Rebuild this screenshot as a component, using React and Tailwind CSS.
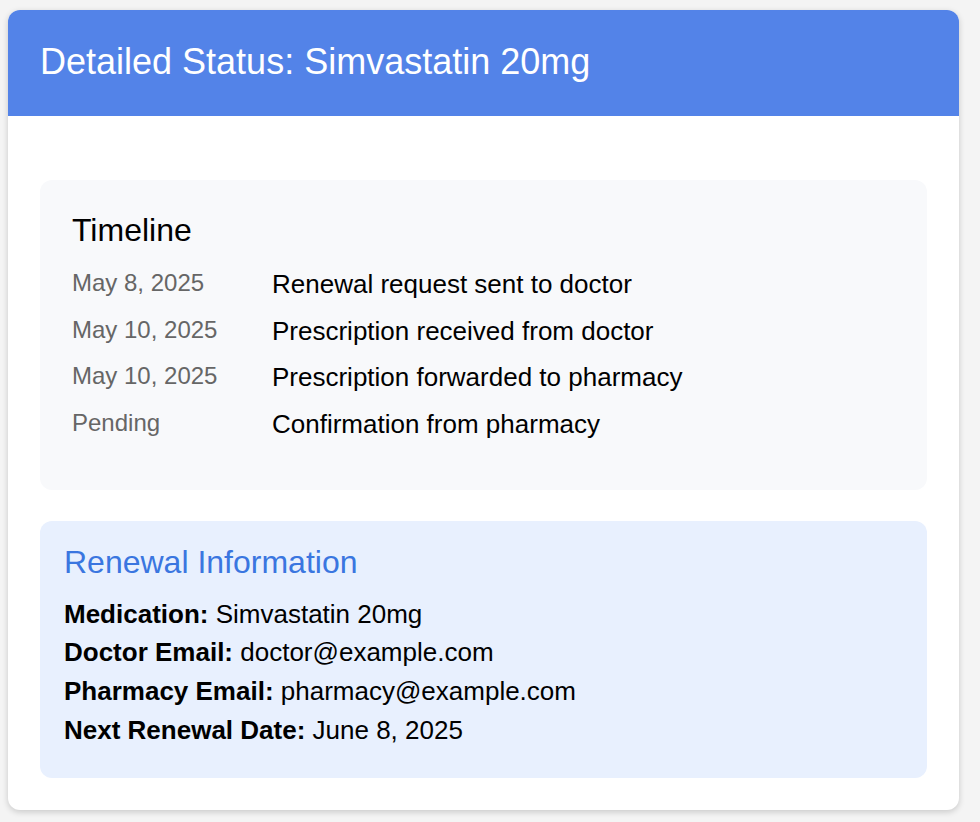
const timeline = [
  { date: 'May 8, 2025', event: 'Renewal request sent to doctor' },
  { date: 'May 10, 2025', event: 'Prescription received from doctor' },
  { date: 'May 10, 2025', event: 'Prescription forwarded to pharmacy' },
  { date: 'Pending', event: 'Confirmation from pharmacy' },
];

const info = [
  { label: 'Medication:', value: 'Simvastatin 20mg' },
  { label: 'Doctor Email:', value: 'doctor@example.com' },
  { label: 'Pharmacy Email:', value: 'pharmacy@example.com' },
  { label: 'Next Renewal Date:', value: 'June 8, 2025' },
];

export default function App() {
  return (
    <div
      className="min-h-screen bg-[#f4f4f4] pt-[10px] pb-4"
      style={{ fontFamily: '"Liberation Sans", Arial, Helvetica, sans-serif' }}
    >
      {/* Card */}
      <div className="ml-2 w-[951px] bg-white rounded-[12px] shadow-[0_2px_6px_rgba(0,0,0,0.18)] overflow-hidden">
        {/* Header */}
        <div className="h-[106px] bg-[#5383e8] px-8 pt-[31px]">
          <h2 className="text-[36px] leading-[41px] text-white font-normal">
            Detailed Status: Simvastatin 20mg
          </h2>
        </div>

        {/* Body */}
        <div className="px-8 pt-16 pb-8">
          {/* Timeline */}
          <div className="bg-[#f8f9fb] rounded-[12px] px-8 pt-8 pb-[43px]">
            <h3 className="text-[32px] leading-[36px] text-black font-normal mb-[12px]">Timeline</h3>
            <div className="flex flex-col">
              {timeline.map((row, i) => (
                <div key={i} className="flex items-start h-[46.7px] pt-[9px]">
                  <div className="w-[200px] shrink-0 text-[24px] leading-[27px] text-[#666666]">{row.date}</div>
                  <div className="text-[26px] leading-[30px] text-black">{row.event}</div>
                </div>
              ))}
            </div>
          </div>

          {/* Renewal Information */}
          <div className="mt-[31px] bg-[#e8f0fe] rounded-[12px] px-6 pt-[23px] pb-[28px]">
            <h3 className="text-[32px] leading-[36px] text-[#3a76e0] font-normal mb-[15px]">
              Renewal Information
            </h3>
            <div className="flex flex-col text-[26px] leading-[38.7px] text-black">
              {info.map((row) => (
                <div key={row.label}>
                  <span className="font-bold">{row.label}</span> {row.value}
                </div>
              ))}
            </div>
          </div>
        </div>
      </div>
    </div>
  );
}
